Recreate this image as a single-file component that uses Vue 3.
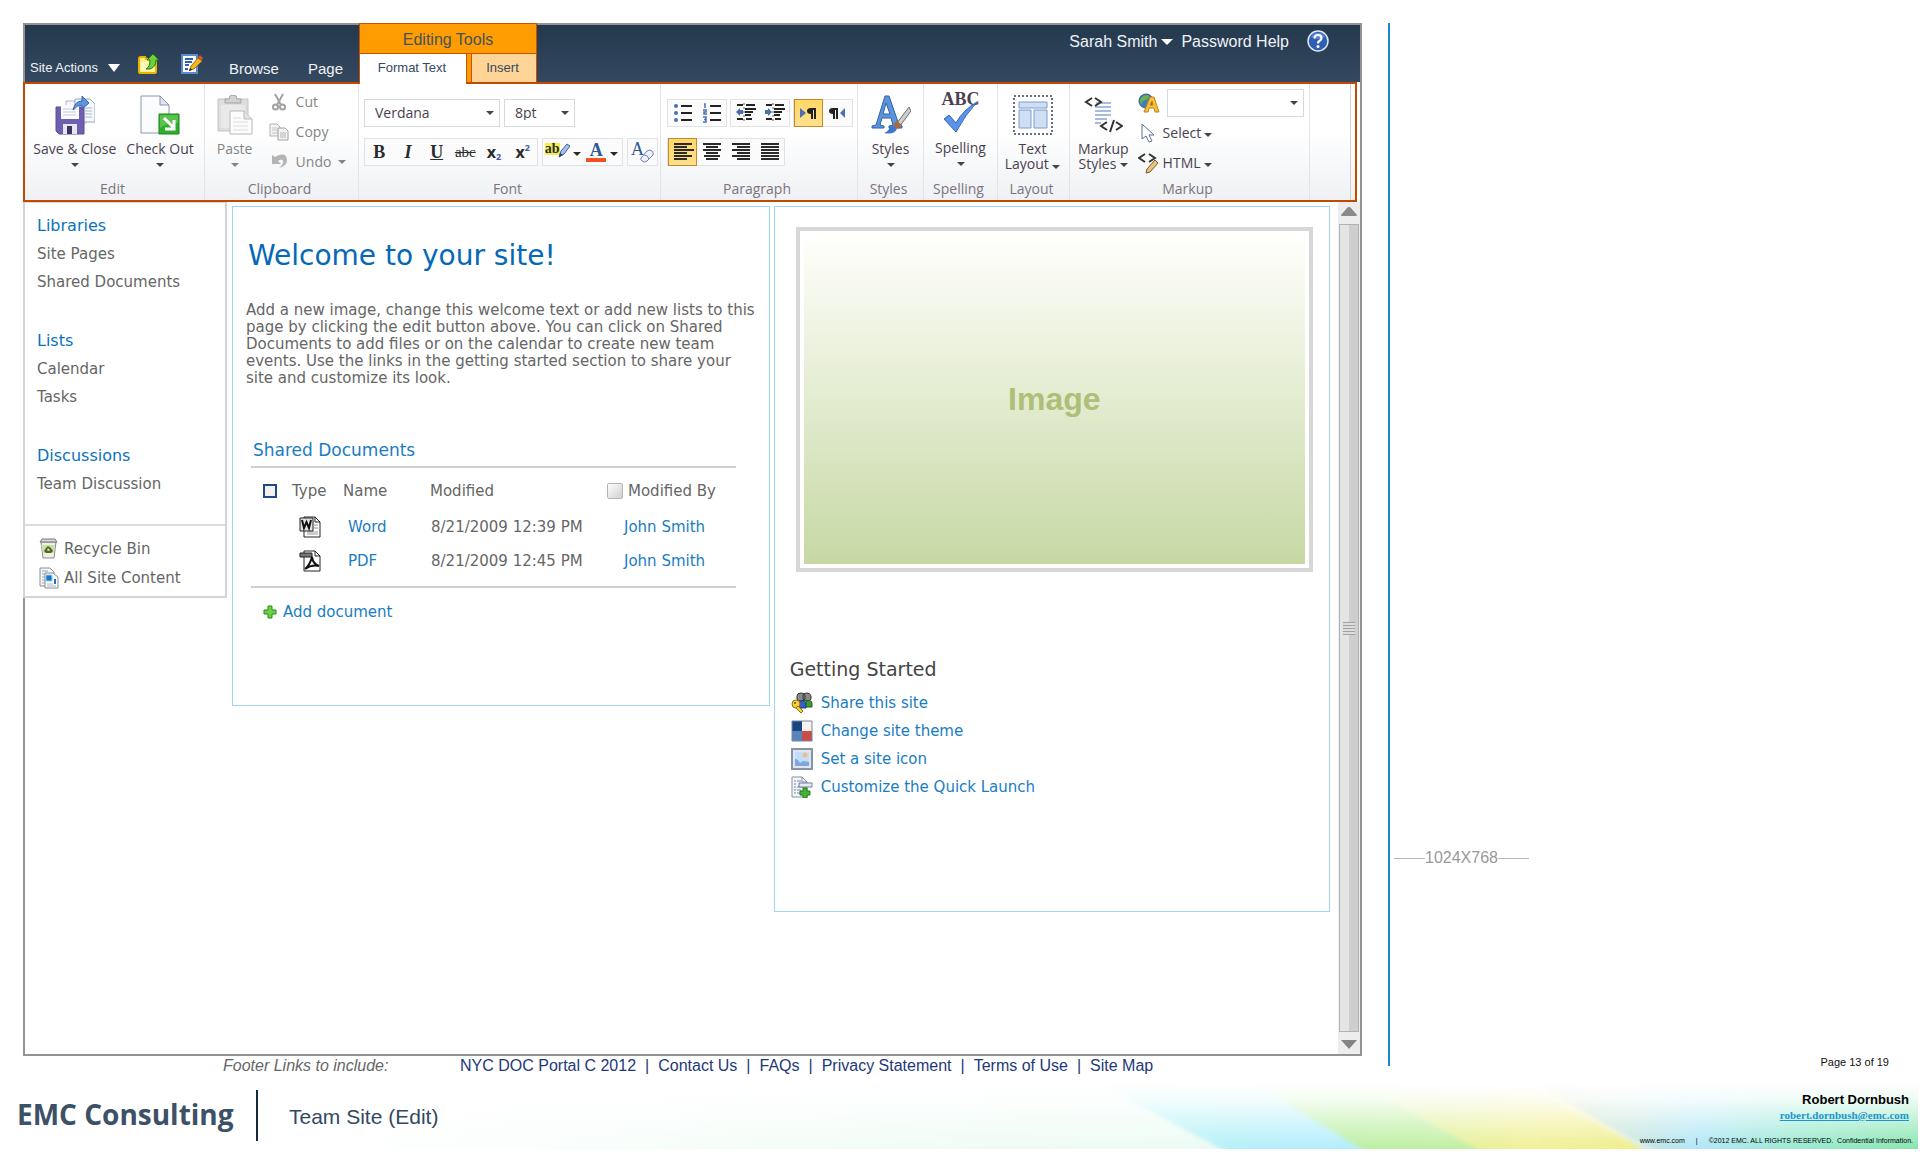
<script setup>
import { ref } from 'vue'

const fontName = ref('Verdana')
const fontSize = ref('8pt')
const markupStyle = ref('')
const allDocs = ref(false)
const byFilter = ref(false)

const navSections = [
  { title: 'Libraries', items: ['Site Pages', 'Shared Documents'] },
  { title: 'Lists', items: ['Calendar', 'Tasks'] },
  { title: 'Discussions', items: ['Team Discussion'] }
]
const documents = [
  { kind: 'word', name: 'Word', modified: '8/21/2009 12:39 PM', by: 'John Smith' },
  { kind: 'pdf', name: 'PDF', modified: '8/21/2009 12:45 PM', by: 'John Smith' }
]
const footerLinks = ['NYC DOC Portal C 2012', 'Contact Us', 'FAQs', 'Privacy Statement', 'Terms of Use', 'Site Map']
const alignments = [
  { name: 'Align left', on: true, rows: [[2, 18], [2, 13], [2, 20], [2, 13], [2, 18], [2, 13]] },
  { name: 'Center', on: false, rows: [[2, 18], [5, 12], [2, 18], [5, 12], [3, 16], [5, 12]] },
  { name: 'Align right', on: false, rows: [[2, 18], [7, 13], [2, 18], [7, 13], [2, 18], [7, 13]] },
  { name: 'Justify', on: false, rows: [[2, 18], [2, 18], [2, 18], [2, 18], [2, 18], [2, 18]] }
]
</script>

<template>
  <div class="page">
    <div class="stage">
      <div class="left">
        <div class="window">
          <header class="topbar">
            <nav class="menu">
              <button class="site-actions">Site Actions
                <svg width="12" height="8" viewBox="0 0 12 8"><path d="M0 0h12L6 8z" fill="#fff" /></svg>
              </button>
              <button class="tool folder" aria-label="Navigate up">
                <svg width="22" height="22" viewBox="0 0 22 22">
                  <path d="M1 6q0-2 2-2h4l1 2h10v13q0 1-1 1H2q-1 0-1-1z" fill="#fff08a" stroke="#e8b400" stroke-width="2" />
                  <path d="M3 9h13v9H3z" fill="#fff9b8" />
                  <path d="M15 1l6 6h-3q0 7-6 9H8q4-2 4-9H9z" fill="#6fcf3a" stroke="#1c7a12" />
                </svg>
              </button>
              <button class="tool edit" aria-label="Edit page">
                <svg width="22" height="22" viewBox="0 0 22 22">
                  <path d="M1 2h15v18H1z" fill="#fff" stroke="#5a8ad0" stroke-width="2" />
                  <path d="M4 6h8M4 9h7M4 12h4M4 16h3" stroke="#2f5fae" stroke-width="2" />
                  <path d="M9 17l1-4 7-8 4 3-8 8z" fill="#f3b526" stroke="#a0700c" />
                  <path d="M17 4l2-2 3 3-2 3z" fill="#d8502c" />
                  <path d="M8 18l1-3 2 2z" fill="#111" />
                </svg>
              </button>
              <button class="tab browse">Browse</button>
              <button class="tab">Page</button>
            </nav>
            <div class="context">
              <div class="context-title">Editing Tools</div>
              <div class="context-tabs">
                <button class="format">Format Text</button>
                <button class="insert">Insert</button>
              </div>
            </div>
            <div class="user">
              <button>Sarah Smith
                <svg width="12" height="6" viewBox="0 0 12 6"><path d="M0 0h12L6 6z" fill="#fff" /></svg>
              </button>
              <a href="#">Password Help</a>
              <button class="help" aria-label="Help">
                <svg width="22" height="22" viewBox="0 0 22 22">
                  <circle cx="11" cy="11" r="10" fill="#2e5fb4" stroke="#dfe9f7" stroke-width="1.5" />
                  <path d="M4 7a8 8 0 0 1 14 0q-7 4-14 0z" fill="#7ea5dd" opacity=".6" />
                  <path d="M7.500 8.500q0-3.500 3.500-3.500t3.500 3q0 1.800-1.800 2.800T11 13.500" fill="none" stroke="#fff" stroke-width="2.200" />
                  <circle cx="11" cy="16.500" r="1.500" fill="#fff" />
                </svg>
              </button>
            </div>
          </header>

          <section class="ribbon" aria-label="Ribbon">
            <div class="group g-edit">
              <div class="body">
                <button class="big">
                  <svg width="40" height="40" viewBox="0 0 40 40">
                    <path d="M11 6h20v22H11z" fill="#f4f7fb" stroke="#aab4c8" />
                    <path d="M20 4h15l5 5v18H20z" fill="#f4f7fb" stroke="#9aa6bd" />
                    <path d="M30 13h7M30 16h7M30 19h7M30 22h7" stroke="#aab9d4" />
                    <path d="M1 12h28v27H4l-3-3z" fill="#6f5fb0" stroke="#5c4c98" />
                    <path d="M6 10h18v14H6z" fill="#fbfbfd" />
                    <path d="M8 14h13M8 17h13M8 20h13" stroke="#c7cbd8" />
                    <path d="M8 29h14v10H8z" fill="#e6e6ef" />
                    <path d="M12 31h5v8h-5z" fill="#3d3266" />
                    <path d="M18 15q2-9 9-9V1l7 7-7 6v-4q-5 0-9 5z" fill="#5f95e0" stroke="#3565ad" />
                  </svg>
                  <span>Save &amp; Close</span><i class="caret"></i>
                </button>
                <button class="big">
                  <svg width="40" height="40" viewBox="0 0 40 40">
                    <path d="M1 1h19l9 9v28H1z" fill="#fbfcfe" stroke="#8b96ad" />
                    <path d="M20 1v9h9z" fill="#dfe6f2" stroke="#8b96ad" />
                    <path d="M19 19h20v20H19z" fill="#2fae2b" stroke="#1b8519" />
                    <path d="M20 20h18v8q-9-1-18 5z" fill="#7fd86e" opacity=".5" />
                    <path d="M24 23l9 9M34 25v9h-9" fill="none" stroke="#fff" stroke-width="3" />
                  </svg>
                  <span>Check Out</span><i class="caret"></i>
                </button>
              </div>
              <div class="label">Edit</div>
            </div>

            <div class="group g-clip">
              <div class="body">
                <button class="big muted">
                  <svg width="36" height="40" viewBox="0 0 36 40">
                    <path d="M1 4h30v32H1z" fill="#dedede" stroke="#c4c4c4" />
                    <path d="M8 8V4h4q0-4 4-4t4 4h4v4z" fill="#d2d2d2" stroke="#a2a2a2" />
                    <path d="M4 10h24v23H4z" fill="#e9e9e9" />
                    <path d="M13 16h14l8 8v15H13z" fill="#fcfcfc" stroke="#b8b8b8" />
                    <path d="M27 16v8h8" fill="#e3e3e3" stroke="#b8b8b8" />
                    <path d="M16 23h8M16 27h15M16 31h15M16 35h15" stroke="#dcdcdc" />
                  </svg>
                  <span>Paste</span><i class="caret"></i>
                </button>
                <div class="stack">
                  <button class="small muted">
                    <svg width="20" height="18" viewBox="0 0 20 18">
                      <path d="M6 1l6 11M14 1L8 12" stroke="#a2a2a2" stroke-width="2" />
                      <circle cx="6.500" cy="14" r="2.500" fill="none" stroke="#a2a2a2" stroke-width="2" />
                      <circle cx="13.500" cy="14" r="2.500" fill="none" stroke="#a2a2a2" stroke-width="2" />
                    </svg>Cut
                  </button>
                  <button class="small muted">
                    <svg width="20" height="18" viewBox="0 0 20 18">
                      <path d="M1 1h7l3 3v9H1z" fill="#f3f3f3" stroke="#b2b2b2" />
                      <path d="M3 5h5M3 7h6M3 10h6" stroke="#c5c5c5" />
                      <path d="M9 5h7l3 3v9H9z" fill="#f3f3f3" stroke="#a2a2a2" />
                      <path d="M11 10h6M11 12h6M11 14h6" stroke="#b5b5b5" />
                    </svg>Copy
                  </button>
                  <button class="small muted">
                    <svg width="20" height="18" viewBox="0 0 20 18">
                      <path d="M3 2v9h9l-3-3q4-3 5 0 1 3-4 7 8-2 8-8-1-9-12-3z" fill="#b4b4b4" />
                    </svg>Undo <i class="caret"></i>
                  </button>
                </div>
              </div>
              <div class="label">Clipboard</div>
            </div>

            <div class="group g-font">
              <div class="body rows">
                <div class="row">
                  <span class="combo name">
                    <select v-model="fontName" aria-label="Font"><option>Verdana</option></select><i class="caret"></i>
                  </span>
                  <span class="combo size">
                    <select v-model="fontSize" aria-label="Font size"><option>8pt</option></select><i class="caret"></i>
                  </span>
                </div>
                <div class="row">
                  <div class="set six">
                    <button class="glyph"><b>B</b></button>
                    <button class="glyph"><em>I</em></button>
                    <button class="glyph"><u>U</u></button>
                    <button class="glyph strike"><s>abc</s></button>
                    <button class="glyph x"><b>x</b><sub>2</sub></button>
                    <button class="glyph x"><b>x</b><sup>2</sup></button>
                  </div>
                  <div class="set two">
                    <button class="glyph highlight"><span>ab</span>
                      <svg width="12" height="16" viewBox="0 0 12 16"><path d="M1 14l2-6 6-7 3 2-6 8z" fill="#a9c0e6" stroke="#3d5f9d" /><path d="M1 14l1-4 3 2z" fill="#2a3f70" /></svg>
                      <i class="caret"></i>
                    </button>
                    <button class="glyph color"><span>A</span><i class="caret"></i></button>
                  </div>
                  <div class="set one">
                    <button class="glyph clear"><span>A</span>
                      <svg width="14" height="14" viewBox="0 0 14 14"><path d="M1 9l6-7q3-2 5 0t1 4l-6 6q-3 2-5 0t-1-3z" fill="#eef2fa" stroke="#6c83b3" /><path d="M4 6q4 0 5 4" fill="none" stroke="#6c83b3" /></svg>
                    </button>
                  </div>
                </div>
              </div>
              <div class="label">Font</div>
            </div>

            <div class="group g-para">
              <div class="body rows">
                <div class="row">
                  <div class="set">
                    <button class="pic" aria-label="Bullets">
                      <svg width="22" height="22" viewBox="0 0 22 22"><path d="M9 4h11M9 11h11M9 18h11" stroke="#222" stroke-width="2" /><g fill="#4a6fb5"><circle cx="4" cy="4" r="2" /><circle cx="4" cy="11" r="2" /><circle cx="4" cy="18" r="2" /></g></svg>
                    </button>
                    <button class="pic" aria-label="Numbering">
                      <svg width="22" height="22" viewBox="0 0 22 22"><path d="M9 4h11M9 11h11M9 18h11" stroke="#222" stroke-width="2" /><path d="M3 2h1v4M2 8h3v2H3v2h3M2 15h3v5H2M3 17.500h2" fill="none" stroke="#4a6fb5" stroke-width="1.500" /></svg>
                    </button>
                  </div>
                  <div class="set">
                    <button class="pic" aria-label="Outdent">
                      <svg width="22" height="22" viewBox="0 0 22 22"><path d="M2 3h6M11 3h9M2 17h6M11 17h6M10 7h11M10 10h8M10 13h6" stroke="#222" stroke-width="2" /><path d="M9 1v20" stroke="#555" stroke-dasharray="2 2" /><path d="M1 10l4-4v2h3v4H5v2z" fill="#4a6fb5" /></svg>
                    </button>
                    <button class="pic" aria-label="Indent">
                      <svg width="22" height="22" viewBox="0 0 22 22"><path d="M2 3h6M11 3h9M2 17h6M11 17h6M10 7h11M10 10h8M10 13h6" stroke="#222" stroke-width="2" /><path d="M9 1v20" stroke="#555" stroke-dasharray="2 2" /><path d="M8 10L4 6v2H1v4h3v2z" fill="#4a6fb5" /></svg>
                    </button>
                  </div>
                  <div class="set">
                    <button class="pic on" aria-label="Left to right">
                      <svg width="22" height="22" viewBox="0 0 22 22"><path d="M2 6l6 5-6 5z" fill="#4a6fb5" /><path d="M18 6h-5q-4 0-4 3t4 3v5h2V8h1v9h2z" fill="#222" /></svg>
                    </button>
                    <button class="pic" aria-label="Right to left">
                      <svg width="22" height="22" viewBox="0 0 22 22"><path d="M18 6l-5 5 5 5z" fill="#4a6fb5" /><path d="M11 6H6Q2 6 2 9t4 3v5h2V8h1v9h2z" fill="#222" /></svg>
                    </button>
                  </div>
                </div>
                <div class="row">
                  <div class="set">
                    <button v-for="a in alignments" :key="a.name" class="pic" :class="{ on: a.on }" :aria-label="a.name">
                      <svg width="22" height="22" viewBox="0 0 22 22">
                        <rect v-for="(r, i) in a.rows" :key="i" :x="r[0]" :y="2 + i * 3" :width="r[1]" height="2" fill="#2a2a2a" />
                      </svg>
                    </button>
                  </div>
                </div>
              </div>
              <div class="label">Paragraph</div>
            </div>

            <div class="group g-styles">
              <div class="body">
                <button class="big">
                  <svg width="40" height="40" viewBox="0 0 40 40">
                    <path d="M1 33v-2l4-1L14 1h4l10 29 3 1v2H18v-2l4-1-2-7H11l-2 7 4 1v2zM12 19h7l-4-11z" fill="#5b93dc" stroke="#2f63a8" />
                    <path d="M38 12L26 28l3 3L40 16z" fill="#cfcfcf" stroke="#6b6b6b" />
                    <path d="M26 26l5 4-4 4-5-4z" fill="#a8693c" />
                    <path d="M22 30l4 4q-3 6-13 4 5-2 5-5 1-3 4-3z" fill="#3f78c8" />
                  </svg>
                  <span>Styles</span><i class="caret"></i>
                </button>
              </div>
              <div class="label">Styles</div>
            </div>

            <div class="group g-spell">
              <div class="body">
                <button class="big spell">
                  <b>ABC</b>
                  <svg width="36" height="34" viewBox="0 0 36 32"><path d="M1 18l5-4 7 8Q20 9 34 1 22 14 13 31z" fill="#5b93ec" stroke="#2f63b8" /></svg>
                  <span>Spelling</span><i class="caret"></i>
                </button>
              </div>
              <div class="label">Spelling</div>
            </div>

            <div class="group g-layout">
              <div class="body">
                <button class="big">
                  <svg width="40" height="40" viewBox="0 0 40 40">
                    <path d="M1 1h38v38H1z" fill="none" stroke="#6a7080" stroke-width="2" stroke-dasharray="2 2" />
                    <path d="M6 7h28v6H6zM6 15h12v18H6zM21 15h13v18H21z" fill="#cfdff3" stroke="#7c9ccb" />
                  </svg>
                  <span>Text<br>Layout <i class="caret"></i></span>
                </button>
              </div>
              <div class="label">Layout</div>
            </div>

            <div class="group g-markup">
              <div class="body">
                <button class="big">
                  <svg width="40" height="40" viewBox="0 0 40 40">
                    <path d="M13 8h15M12 12h16M12 16h16M12 20h16M12 24h12M12 28h6" stroke="#a7bbdd" stroke-width="2" />
                    <path d="M9 3L3 7l6 4M12 3l6 4-6 4M24 27l-6 4 6 4M33 27l6 4-6 4M31 25l-4 12" fill="none" stroke="#333" stroke-width="2" />
                  </svg>
                  <span>Markup<br>Styles <i class="caret"></i></span>
                </button>
                <div class="stack">
                  <div class="pick">
                    <svg width="22" height="22" viewBox="0 0 22 22">
                      <circle cx="8" cy="9" r="7" fill="#3f7fb8" stroke="#2a5a86" />
                      <path d="M3 6q4-5 8-2-1 4-4 4t-3 5Q1 10 3 6z" fill="#69b352" />
                      <path d="M6 20L12 5h4l5 15h-4l-1-4h-5l-1 4zM12 13h3l-1-4z" fill="#f7c23b" stroke="#c47f12" />
                    </svg>
                    <span class="combo style">
                      <select v-model="markupStyle" aria-label="Markup style"><option value=""></option></select><i class="caret"></i>
                    </span>
                  </div>
                  <button class="small">
                    <svg width="22" height="20" viewBox="0 0 22 20">
                      <path d="M4 1v15l4-3 3 6 3-1-3-6h5z" fill="#fff" stroke="#5c6f92" />
                    </svg>Select <i class="caret"></i>
                  </button>
                  <button class="small">
                    <svg width="22" height="22" viewBox="0 0 22 22">
                      <path d="M7 2L1 6l6 4M11 2l6 4-6 4" fill="none" stroke="#333" stroke-width="2" />
                      <path d="M8 21l1-4 8-9 3 3-8 9z" fill="#e8c384" stroke="#7a5a28" />
                    </svg>HTML <i class="caret"></i>
                  </button>
                </div>
              </div>
              <div class="label">Markup</div>
            </div>
            <div class="ribbon-end"></div>
          </section>

          <div class="content">
            <aside class="sidebar">
              <nav class="nav">
                <section v-for="s in navSections" :key="s.title">
                  <h2>{{ s.title }}</h2>
                  <a v-for="i in s.items" :key="i" href="#">{{ i }}</a>
                </section>
              </nav>
              <div class="tools">
                <a href="#">
                  <svg width="20" height="22" viewBox="0 0 20 22">
                    <path d="M2 4h15l-2 16H4z" fill="#edf1e4" stroke="#8b8b8b" />
                    <path d="M2 7h14l-1 8H4z" fill="#cfdcae" />
                    <path d="M3 1h13l2 3H1z" fill="#d8d8d8" stroke="#777" />
                    <path d="M9 8l3 2 2 3-2 2H7l-2-2 2-3zM9 10l-1 2 1 1h1l1-1z" fill="#4c6b1e" fill-rule="evenodd" />
                  </svg>Recycle Bin
                </a>
                <a href="#">
                  <svg width="20" height="22" viewBox="0 0 20 22">
                    <path d="M1 1h10l4 4v14H1z" fill="#f6f7f9" stroke="#878c94" />
                    <path d="M3 4h6M3 7h3M3 10h3M3 13h3M3 16h3" stroke="#9aa3ae" />
                    <path d="M6 6h8l5 4v11H6z" fill="#fff" stroke="#878c94" />
                    <path d="M7 8h6v6H7z" fill="#1477c9" stroke="#9cc8ec" />
                    <path d="M15 12h2v5h-2z" fill="#1477c9" /><path d="M8 17h6M8 19h9" stroke="#aeb5bd" />
                  </svg>All Site Content
                </a>
              </div>
            </aside>

            <main class="panels">
              <article class="panel welcome">
                <h1>Welcome to your site!</h1>
                <p>Add a new image, change this welcome text or add new lists to this<br>page by clicking the edit button above. You can click on Shared<br>Documents to add files or on the calendar to create new team<br>events. Use the links in the getting started section to share your<br>site and customize its look.</p>
                <section class="docs">
                  <h2>Shared Documents</h2>
                  <table>
                    <thead>
                      <tr>
                        <th class="c-check"><input v-model="allDocs" type="checkbox" class="square" aria-label="Select all"></th>
                        <th class="c-type">Type</th>
                        <th class="c-name">Name</th>
                        <th class="c-mod">Modified</th>
                        <th class="c-by"><label><input v-model="byFilter" type="checkbox" class="soft">Modified By</label></th>
                      </tr>
                    </thead>
                    <tbody>
                      <tr v-for="d in documents" :key="d.name">
                        <td></td>
                        <td class="icon">
                          <svg v-if="d.kind === 'word'" width="22" height="22" viewBox="0 0 22 22">
                            <path d="M5 1h11l5 5v15H5z" fill="#fff" stroke="#222" />
                            <path d="M16 1v5h5" fill="none" stroke="#222" />
                            <path d="M15 9h4M15 12h4M8 16h11M8 18h11" stroke="#999" />
                            <path d="M1 2h13v13H1z" fill="#e4e4e4" stroke="#222" />
                            <path d="M3 4l2 8 2.500-6L10 12l2-8" fill="none" stroke="#111" stroke-width="2" />
                          </svg>
                          <svg v-else width="22" height="22" viewBox="0 0 22 22">
                            <path d="M5 1h11l5 5v15H5z" fill="#fff" stroke="#222" />
                            <path d="M16 1v5h5" fill="none" stroke="#222" />
                            <path d="M1 3h12v4H1z" fill="#777" stroke="#222" />
                            <path d="M6 19q5-4 7-12 1 7 7 9-7-2-14 3z" fill="none" stroke="#111" stroke-width="2" />
                          </svg>
                        </td>
                        <td class="indent"><a href="#">{{ d.name }}</a></td>
                        <td class="when">{{ d.modified }}</td>
                        <td class="who"><a href="#">{{ d.by }}</a></td>
                      </tr>
                    </tbody>
                  </table>
                  <a href="#" class="add">
                    <svg width="14" height="14" viewBox="0 0 14 14"><path d="M5 1h4v4h4v4H9v4H5V9H1V5h4z" fill="#6fd047" stroke="#1f8f14" /></svg>
                    Add document
                  </a>
                </section>
              </article>

              <article class="panel start">
                <div class="picture"><div>Image</div></div>
                <h2>Getting Started</h2>
                <ul>
                  <li><a href="#">
                    <svg width="22" height="22" viewBox="0 0 22 22">
                      <path d="M6 4q0-3 4-3t4 3v3q0 2-4 2T6 7zM12 3q1-2 4-2t4 3v3q-1 2-4 2t-4-2z" fill="#8a8a8a" stroke="#333" />
                      <path d="M8 10q4-3 7 1v5H8z" fill="#2f62c9" stroke="#173a86" />
                      <path d="M15 9q6-2 6 3v3h-6z" fill="#3f9a36" stroke="#1d5c18" />
                      <circle cx="5" cy="12" r="4" fill="#f6cf3c" stroke="#94720b" />
                      <path d="M7 14l5 5-2 2-5-5z" fill="#f6cf3c" stroke="#94720b" /><circle cx="4" cy="11" r="1" fill="#6b5208" />
                    </svg>Share this site</a></li>
                  <li><a href="#">
                    <svg width="22" height="22" viewBox="0 0 22 22">
                      <path d="M1 1h10v10H1z" fill="#17477e" /><path d="M11 1h10v10H11z" fill="#fbf1ee" />
                      <path d="M1 11h10v10H1z" fill="#5b83bb" /><path d="M11 11h10v10H11z" fill="#c94d45" />
                      <path d="M1 1h20v20H1z" fill="none" stroke="#7484a5" />
                    </svg>Change site theme</a></li>
                  <li><a href="#">
                    <svg width="22" height="22" viewBox="0 0 22 22">
                      <path d="M1 1h20v20H1z" fill="#dfe6ef" stroke="#8792a8" stroke-width="2" />
                      <path d="M4 4h14v14H4z" fill="#bfe0fa" />
                      <circle cx="14" cy="7" r="2.500" fill="#f9b98c" />
                      <path d="M4 18v-7q3 0 5 4l3-2 6 1v4z" fill="#7fa6dd" />
                    </svg>Set a site icon</a></li>
                  <li><a href="#">
                    <svg width="22" height="22" viewBox="0 0 22 22">
                      <path d="M1 1h10l5 5v15H1z" fill="#f4f6fa" stroke="#8590a5" />
                      <path d="M11 1v5h5" fill="none" stroke="#8590a5" />
                      <path d="M3 5h2M3 8h2M3 11h2M3 14h2M3 17h2M6 5h4M6 11h6M6 14h4M6 17h3" stroke="#7487ab" />
                      <path d="M8 7h13v4H8z" fill="#e7edf6" stroke="#6f7f9e" />
                      <path d="M12 12h4v3h3v4h-3v3h-4v-3H9v-4h3z" fill="#49b335" stroke="#1d7d12" />
                    </svg>Customize the Quick Launch</a></li>
                </ul>
              </article>
            </main>

            <div class="scroll" aria-hidden="true">
              <svg width="16" height="9" viewBox="0 0 16 9"><path d="M0 8q0 1 1 1h14q1 0 1-1L10 1Q8-1 6 1z" fill="#8a8a8a" /></svg>
              <div class="thumb"><span class="grip"></span></div>
              <svg width="16" height="9" viewBox="0 0 16 9"><path d="M0 0h16L8 9z" fill="#858585" /></svg>
            </div>
          </div>
        </div>

        <div class="links">
          <em>Footer Links to include:</em>
          <nav>
            <template v-for="(l, i) in footerLinks" :key="l">
              <span v-if="i">|</span><a href="#">{{ l }}</a>
            </template>
          </nav>
        </div>
      </div>

      <aside class="margin">
        <div class="size-note">1024X768</div>
        <div class="page-no">Page 13 of 19</div>
      </aside>
    </div>

    <footer class="brand">
      <svg class="swoosh" viewBox="0 0 1600 66" preserveAspectRatio="none" aria-hidden="true">
        <defs>
          <linearGradient id="haze" x1="0" x2="1"><stop offset="0" stop-color="#fff" /><stop offset=".45" stop-color="#eefcf4" /><stop offset="1" stop-color="#e4f8f6" /></linearGradient>
          <linearGradient id="cyan" x1="0" x2="1"><stop offset="0" stop-color="#b4f4f2" /><stop offset="1" stop-color="#b2ecff" /></linearGradient>
          <linearGradient id="green" x1="0" x2="1"><stop offset="0" stop-color="#b4f0a4" /><stop offset="1" stop-color="#c4efa0" /></linearGradient>
          <linearGradient id="yellow" x1="0" x2="1"><stop offset="0" stop-color="#d4f09c" /><stop offset=".6" stop-color="#f1f195" /><stop offset="1" stop-color="#efee8c" /></linearGradient>
          <linearGradient id="sea" x1="0" x2="1"><stop offset="0" stop-color="#c6dcae" /><stop offset=".2" stop-color="#c8e4d8" /><stop offset=".4" stop-color="#b0e6f8" /><stop offset=".65" stop-color="#98ead0" /><stop offset="1" stop-color="#84e4a8" /></linearGradient>
          <linearGradient id="fade" x1="0" x2="0" y1="0" y2="1"><stop offset="0" stop-color="#fff" /><stop offset=".25" stop-color="#fff" stop-opacity=".85" /><stop offset="1" stop-color="#fff" stop-opacity="0" /></linearGradient>
          <filter id="soft"><feGaussianBlur stdDeviation="2" /></filter>
        </defs>
        <path d="M0 0h1600v66H0z" fill="url(#haze)" />
        <g filter="url(#soft)">
          <path d="M780 0h200l90 72H915z" fill="url(#cyan)" />
          <path d="M935 0h160l90 72h-132z" fill="url(#green)" />
          <path d="M1040 0h190l105 72h-165z" fill="url(#yellow)" />
          <path d="M1220 0h400v72h-285z" fill="url(#sea)" />
          <path d="M1222 8l116 62" stroke="#fff" stroke-width="4" opacity=".4" />
        </g>
        <path d="M0 0h1600v66H0z" fill="url(#fade)" />
      </svg>
      <strong class="logo">EMC Consulting</strong>
      <span class="title">Team Site (Edit)</span>
      <address>
        <b>Robert Dornbush</b>
        <a href="#">robert.dornbush@emc.com</a>
        <small><span>www.emc.com</span><span>|</span><span>©2012 EMC. ALL RIGHTS RESERVED. &nbsp;Confidential Information.</span></small>
      </address>
    </footer>
  </div>
</template>

<style>
body { margin: 0; background: #fff; }
</style>

<style scoped>
* { box-sizing: border-box; }
.page { font-family: "Liberation Sans", Arial, sans-serif; padding-top: 23px; }
button { font: inherit; color: inherit; background: none; border: 0; padding: 0; margin: 0; cursor: pointer; white-space: nowrap; }
a { color: inherit; text-decoration: none; }
h1, h2, p, ul { margin: 0; padding: 0; font-weight: 400; }
svg { display: block; flex: none; }

.stage { display: grid; grid-template-columns: minmax(0, 1fr) 532px; gap: 26px; padding-left: 23px; }
.window { border: 2px solid #929490; }

/* dark bar */
.topbar { display: flex; height: 57px; background: linear-gradient(#24394e, #34495f); color: #eef2f6; }
.menu { display: flex; align-items: flex-end; width: 334px; padding: 0 0 4px 5px; }
.site-actions { display: flex; align-items: center; gap: 10px; font-size: 13px; line-height: 20px; }
.tool { margin-left: 18px; padding-bottom: 3px; }
.tool.edit { margin-left: 21px; }
.tab { font-size: 15px; line-height: 18px; margin-left: 29px; }
.tab.browse { margin-left: 26px; }
.context { position: relative; z-index: 1; display: flex; flex-direction: column; width: 178px; margin-top: -2px; background: #ff9c00; border: solid #c85000; border-width: 1px 1px 0; color: #43525c; }
.context-title { flex: 1; display: flex; align-items: center; justify-content: center; font-size: 16px; padding-top: 2px; }
.context-tabs { display: flex; gap: 4px; height: 29px; border-top: 1px solid #c85000; font-size: 13px; color: #34495f; }
.context-tabs button { height: 28px; }
.context-tabs .format { height: 30px; width: 107px; padding: 0 2px 4px 0; background: #fff; border-right: 1px solid #c85000; }
.insert { flex: 1; background: #ffd597; border-left: 1px solid #c85000; }
.context-tabs .insert { padding: 0 3px 2px 0; }
.user { display: flex; align-items: flex-start; margin-left: auto; gap: 8px; padding: 8px 31px 0 0; font-size: 16px; line-height: 18px; }
.user button { display: flex; align-items: center; gap: 4px; }
.user .help { margin: -3px 0 0 10px; }

/* ribbon */
.ribbon { display: flex; height: 120px; margin: 0 3px 0 -2px; border: 2px solid #c24a00; background: linear-gradient(#fff 40%, #eff1f4); font-family: "Open Sans", "Noto Sans", sans-serif; font-size: 14px; line-height: 14px; color: #4a4150; }
.group { display: flex; flex-direction: column; flex: none; padding-top: 5px; border-right: 1px solid #e1e4e9; }
.body { flex: 1; display: flex; justify-content: center; }
.label { text-align: center; color: #7b7480; line-height: 20px; padding: 0 4px 1px 0; }
.g-edit { width: 180px; }
.g-clip { width: 154px; }
.g-font { width: 302px; }
.g-para { width: 197px; }
.g-styles { width: 66px; }
.g-spell { width: 74px; }
.g-layout { width: 72px; }
.g-markup { width: 240px; }
.g-edit .body { gap: 10px; padding-right: 2px; }
.big { display: flex; flex-direction: column; align-items: center; gap: 7px; padding-top: 6px; align-self: flex-start; }
.muted { color: #858585; }
.caret { display: inline-block; flex: none; width: 0; height: 0; border: solid transparent; border-width: 4px 4px 0; border-top-color: currentColor; vertical-align: middle; }
.stack { display: flex; flex-direction: column; }
.small { display: flex; align-items: center; gap: 5px; }
.g-clip .body { gap: 16px; }
.g-clip .stack { gap: 12px; padding-top: 4px; }
.g-clip .small { gap: 7px; height: 18px; }
.rows { flex-direction: column; justify-content: flex-start; gap: 11px; padding: 10px 0 0 5px; }
.g-para .rows { padding-left: 6px; }
.row { display: flex; gap: 4px; }
.g-para .row { gap: 3px; }
.combo { position: relative; display: block; height: 28px; }
.combo select { appearance: none; width: 100%; height: 100%; margin: 0; padding: 0 10px; font: inherit; color: inherit; background: #fff; border: 1px solid #d6d9de; border-radius: 0; }
.combo .caret { position: absolute; right: 6px; top: 12px; pointer-events: none; }
.combo.name { width: 136px; }
.combo.size { width: 71px; }
.combo.style { width: 137px; }
.set { display: flex; height: 28px; border: 1px solid #e0e2e6; background: #fbfbfc; }
.six { width: 174px; }
.two { width: 81px; }
.one { width: 31px; }
.glyph { position: relative; flex: 1; display: flex; align-items: center; justify-content: center; font-family: "Liberation Serif", serif; font-size: 18px; color: #2b2b2b; }
.glyph em, .glyph u { font-weight: 700; }
.strike { font-size: 15px; }
.x { font-family: "Open Sans", sans-serif; font-size: 16px; }
.x sub, .x sup { font-size: 9px; font-weight: 700; color: #3e5aa8; line-height: 9px; }
.x sub { align-self: flex-end; padding-bottom: 4px; }
.x sup { align-self: flex-start; padding-top: 4px; }
.highlight { font-size: 14px; font-weight: 700; }
.highlight span { background: #f3ee52; line-height: 12px; margin-bottom: 6px; }
.highlight svg { margin: 0 3px 2px -2px; }
.highlight .caret, .color .caret { margin-top: 4px; }
.color { gap: 4px; font-weight: 700; color: #2b2b2b; }
.color span { width: 20px; color: #2e5a94; line-height: 16px; border-bottom: 4px solid #f4511e; }
.clear span { color: #2e5a94; margin: 0 -4px 6px 0; }
.clear svg { margin-top: 8px; }
.pic { display: flex; align-items: center; justify-content: center; width: 29px; }
.g-para .row .pic.on { margin: -1px 0; border: 1px solid #c28a2c; background: linear-gradient(#ffd868, #ffe08a); }
.spell b { font-family: "Liberation Serif", serif; font-size: 18px; line-height: 14px; }
.spell svg { margin-top: -13px; }
.big.spell { padding-top: 3px; }
.g-layout .big, .g-markup .big { gap: 6px; }
.g-layout .big span, .g-markup .big span { line-height: 15px; }
.g-layout .body { padding-right: 2px; }
.g-markup .body { justify-content: flex-start; gap: 9px; padding-left: 8px; }
.g-markup .stack { gap: 2px; }
.pick { display: flex; align-items: center; gap: 7px; }
.g-markup .small { height: 28px; gap: 3px; }
.g-layout .caret, .g-markup .small .caret { margin-top: 4px; }
.ribbon-end { flex: 1; border-right: 1px solid #cfd2d6; margin-right: 4px; }

/* page content */
.content { display: flex; align-items: flex-start; min-height: 852px; font-family: "DejaVu Sans", Verdana, sans-serif; font-size: 15px; color: #666; }
.sidebar { flex: none; width: 204px; margin-left: -2px; border: 2px solid #d3d4d6; border-top-width: 1px; line-height: 28px; }
.nav { display: flex; flex-direction: column; gap: 31px; padding: 9px 12px 26px; }
.nav a { display: block; }
.nav h2 { font-size: 16px; color: #0b72bd; }
.tools { border-top: 2px solid #dcdddf; padding: 8px 14px 4px; }
.tools a { display: flex; align-items: center; gap: 5px; height: 29px; white-space: nowrap; }
.panels { flex: 1; display: grid; grid-template-columns: 537fr 558fr; gap: 4px; align-items: start; padding: 4px 8px 0 5px; min-width: 0; }
.panel { border: 1px solid #a0d4f4; }
.welcome { min-height: 500px; padding: 31px 14px 0 13px; }
h1 { font-size: 28px; line-height: 36px; color: #0568b8; padding-left: 2px; }
.welcome p { font-size: 15px; line-height: 17px; padding-top: 28px; white-space: nowrap; }
.docs { padding: 51px 19px 0 5px; }
.docs h2 { font-size: 17px; line-height: 24px; color: #1a7cc4; padding: 0 0 4px 2px; }
table { width: 100%; border-collapse: collapse; border-top: 2px solid #cfcfcf; border-bottom: 2px solid #cfcfcf; table-layout: fixed; }
th, td { font-weight: 400; text-align: left; padding: 0; white-space: nowrap; height: 35px; }
th { height: 42px; padding-top: 4px; }
tbody tr:last-child td { height: 43px; padding-bottom: 8px; }
.c-check { width: 41px; }
.c-type { width: 51px; }
.c-name { width: 87px; }
.c-mod { width: 177px; }
.c-by label { display: flex; align-items: center; gap: 5px; }
input { appearance: none; margin: 0; flex: none; }
.square { display: block; width: 14px; height: 14px; margin-left: 12px; border: 2px solid #1b4a86; background: #f1f1f1; }
.soft { width: 16px; height: 16px; border: 1px solid #b5b5b5; border-radius: 2px; background: linear-gradient(135deg, #fff, #cfcfcf); }
.icon { padding-left: 7px; }
.indent { padding-left: 5px; }
.when { padding-left: 1px; }
.who { padding-left: 17px; }
td a, .add { color: #1a7cc4; }
.add { display: flex; align-items: center; gap: 6px; line-height: 20px; padding: 14px 0 0 12px; }
.start { min-height: 706px; padding: 20px 16px 0 15px; }
.picture { margin-left: 6px; border: 4px solid #d7d7d7; padding: 4px; }
.picture div { display: flex; align-items: center; justify-content: center; height: 329px; background: linear-gradient(#fffffc, #c7d8a4); color: #afbf78; font: 700 32px "Liberation Sans", Arial, sans-serif; }
.start h2 { font-size: 19px; line-height: 26px; color: #444; padding-top: 84px; }
ul { list-style: none; padding: 7px 0 0 1px; }
li a { display: flex; align-items: center; gap: 8px; height: 28px; color: #1a7cc4; }
.scroll { flex: none; align-self: stretch; width: 22px; display: flex; flex-direction: column; align-items: center; gap: 8px; padding: 5px 0; background: #ededee; }
.thumb { flex: 1; width: 20px; display: flex; align-items: center; justify-content: center; border: 1px solid #b2b2b2; background: linear-gradient(90deg, #e4e4e4 50%, #cecece 50%); }
.grip { width: 12px; height: 13px; background: repeating-linear-gradient(#a0a0a0 0 1px, #dedede 1px 3px); }

/* below the window */
.links { display: flex; font-size: 16px; line-height: 18px; padding: 1px 0 0 200px; color: #23387a; white-space: nowrap; }
.links em { width: 237px; color: #666; }
.links nav { display: flex; gap: 9px; }
.margin { position: relative; display: flex; flex-direction: column; justify-content: space-between; padding: 825px 31px 6px 6px; }
.margin::before { content: ""; position: absolute; left: 0; top: 0; bottom: 9px; width: 2px; background: #168acb; }
.size-note { display: flex; align-items: center; font-size: 16px; line-height: 20px; color: #999; }
.size-note::before, .size-note::after { content: ""; width: 31px; height: 1px; background: #b8b8b8; }
.page-no { align-self: flex-end; font-size: 11px; line-height: 14px; color: #111; }
.brand { position: relative; display: flex; margin-top: 8px; height: 66px; color: #34495f; }
.brand > * { position: relative; }
.brand .swoosh { position: absolute; right: 2px; top: 0; width: calc(100% - 320px); height: 66px; }
.logo { width: 240px; padding: 12px 0 0 17px; font: 700 28px/38px "Open Sans", sans-serif; white-space: nowrap; color: #3c5166; }
.title { margin: 7px 0 8px 16px; border-left: 2px solid #14293d; padding: 14px 0 0 31px; font-size: 21px; line-height: 26px; }
address { margin-left: auto; padding-right: 7px; display: flex; flex-direction: column; align-items: flex-end; font-style: normal; color: #000; }
address b { font-size: 13px; line-height: 16px; padding: 9px 4px 0 0; }
address a { font: 700 11px/14px "Liberation Serif", serif; color: #1c94d2; text-decoration: underline; padding-right: 4px; }
address small { display: flex; gap: 11px; font-size: 7px; line-height: 10px; padding-top: 14px; }
</style>
